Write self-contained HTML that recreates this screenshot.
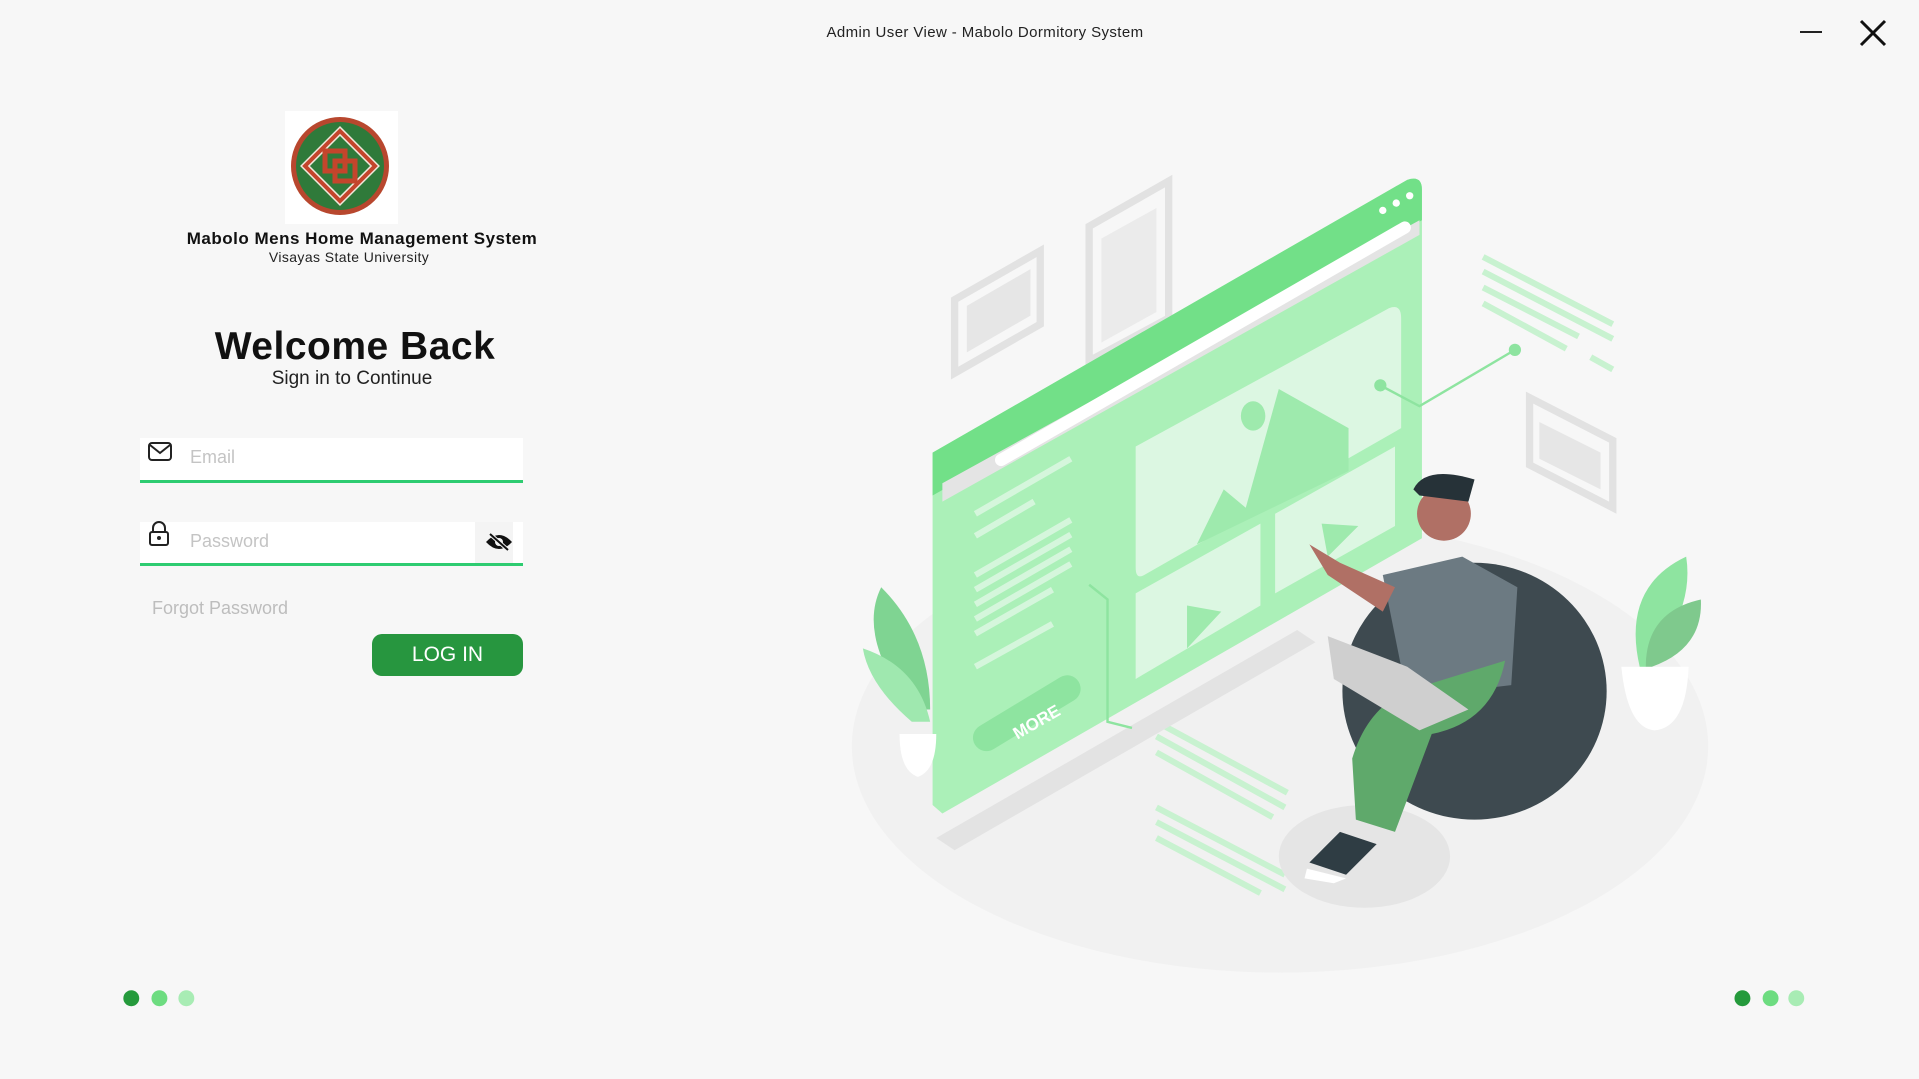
<!DOCTYPE html>
<html><head><meta charset="utf-8"><style>
*{margin:0;padding:0;box-sizing:border-box}
body{width:1919px;height:1079px;background:#f7f7f7;font-family:"Liberation Sans",sans-serif;position:relative;overflow:hidden}
.a{position:absolute}
.c{position:absolute;transform:translateX(-50%);white-space:nowrap;text-align:center}
</style></head><body>
<div class="c" style="left:985px;top:24px;font-size:15px;color:#222;letter-spacing:0.4px">Admin User View - Mabolo Dormitory System</div>
<div class="a" style="left:1800px;top:31px;width:22px;height:2px;background:#222"></div>
<svg class="a" style="left:1858px;top:18px" width="30" height="30"><path d="M3 3L27 27M27 3L3 27" stroke="#111" stroke-width="3"/></svg>

<div class="a" style="left:285px;top:111px;width:113px;height:113px;background:#fff"></div>
<svg class="a" style="left:285px;top:111px" width="113" height="113">
<circle cx="55" cy="55" r="49" fill="#b8472e"/><circle cx="55" cy="55" r="44" fill="#2f7a3a"/>
<path d="M55 20L90 55L55 90L20 55Z" fill="none" stroke="#f1e8dc" stroke-width="7"/>
<path d="M55 20L90 55L55 90L20 55Z" fill="none" stroke="#c4452c" stroke-width="4"/>
<path d="M40 40h20v20h-20zM50 50h20v20h-20z" fill="none" stroke="#c4452c" stroke-width="5"/>
</svg>
<div class="c" style="left:362px;top:229px;font-size:17px;font-weight:bold;color:#111;letter-spacing:0.5px">Mabolo Mens Home Management System</div>
<div class="c" style="left:349px;top:249px;font-size:14px;color:#222;letter-spacing:0.4px">Visayas State University</div>
<div class="c" style="left:355px;top:325px;font-size:39px;font-weight:bold;color:#111;letter-spacing:0.5px">Welcome Back</div>
<div class="c" style="left:352px;top:368px;font-size:19px;color:#222">Sign in to Continue</div>

<div class="a" style="left:140px;top:438px;width:383px;height:45px;background:#fff;border-bottom:3px solid #2ecc71"></div>
<svg class="a" style="left:147px;top:441px" width="26" height="22"><rect x="2" y="2" width="22" height="17" rx="3" fill="none" stroke="#222" stroke-width="2"/><path d="M3 4L13 12L23 4" fill="none" stroke="#222" stroke-width="2"/></svg>
<div class="a" style="left:190px;top:447px;font-size:18px;color:#c4c4c4">Email</div>

<div class="a" style="left:140px;top:522px;width:383px;height:44px;background:#fff;border-bottom:3px solid #2ecc71"></div>
<div class="a" style="left:475px;top:522px;width:38px;height:41px;background:#f4f4f4"></div>
<svg class="a" style="left:148px;top:520px" width="22" height="28"><path d="M5 12V8a6 6 0 0 1 12 0v4" fill="none" stroke="#222" stroke-width="2"/><rect x="2" y="12" width="18" height="13" rx="2" fill="none" stroke="#222" stroke-width="2"/><circle cx="11" cy="18" r="2" fill="#222"/></svg>
<div class="a" style="left:190px;top:531px;font-size:18px;color:#c4c4c4">Password</div>
<svg class="a" style="left:485px;top:532px" width="28" height="20"><path d="M1 10Q14 -4 27 10Q14 24 1 10Z" fill="#111"/><circle cx="14" cy="10" r="4" fill="#f4f4f4"/><path d="M5 2L23 18" stroke="#f4f4f4" stroke-width="4"/><path d="M5 2L23 18" stroke="#111" stroke-width="2"/></svg>

<div class="a" style="left:152px;top:598px;font-size:18px;color:#bdbdbd">Forgot Password</div>
<div class="a" style="left:372px;top:634px;width:151px;height:42px;background:#27963f;border-radius:10px;color:#fff;font-size:21px;text-align:center;line-height:42px">LOG IN</div>

<svg class="a" style="left:0;top:0" width="1919" height="1079" viewBox="0 0 1568 882">
<circle cx="107" cy="816" r="6.5" fill="#259a3c"/><circle cx="130" cy="816" r="6.5" fill="#6ddc80"/><circle cx="152" cy="816" r="6.5" fill="#a8ecb4"/>
<circle cx="1424" cy="816" r="6.5" fill="#259a3c"/><circle cx="1447" cy="816" r="6.5" fill="#6ddc80"/><circle cx="1468" cy="816" r="6.5" fill="#a8ecb4"/>
<ellipse cx="1046" cy="610" rx="350" ry="185" fill="#f1f1f1"/>
<path d="M780 245L850 205V265L780 305Z" fill="none" stroke="#e2e2e2" stroke-width="6"/>
<path d="M790 250L842 220V258L790 288Z" fill="#e6e6e6"/>
<path d="M890 185L955 148V260L890 295Z" fill="none" stroke="#e2e2e2" stroke-width="6"/>
<path d="M900 195L945 170V255L900 280Z" fill="#ebebeb"/>
<path d="M1250 325L1318 360V415L1250 380Z" fill="none" stroke="#e2e2e2" stroke-width="6"/>
<path d="M1258 345L1308 370V400L1258 375Z" fill="#e6e6e6"/>
<g stroke="#c8f2d0" stroke-width="5">
<path d="M1212 210L1318 265M1212 222L1318 277M1212 235L1290 275M1212 248L1280 285M1300 292L1318 302"/>
<path d="M945 590L1052 648M945 602L1050 660M945 615L1040 668M945 660L1050 715M945 672L1050 727M945 685L1030 730"/>
</g>
<path d="M765 685L1060 515L1075 525L780 695Z" fill="#e3e3e3"/>
<path d="M762 370L1150 147Q1162 143 1162 155V440L770 665L762 658Z" fill="#abf0b8"/>
<path d="M762 370L1150 147Q1162 143 1162 155V180L762 405Z" fill="#72e088"/>
<path d="M770 395L1160 180V192L770 410Z" fill="#e4e4e4"/>
<path d="M818 376L1148 186" stroke="#fff" stroke-width="10" stroke-linecap="round"/>
<circle cx="1130" cy="172" r="3" fill="#fff"/><circle cx="1141" cy="166" r="3" fill="#fff"/><circle cx="1152" cy="160" r="3" fill="#fff"/>
<path d="M928 365L1135 252Q1145 248 1145 260V350L935 470Q928 474 928 464Z" fill="#dcf7e2"/>
<path d="M978 445L1000 400L1018 415L1045 318L1102 350V385L978 445Z" fill="#9eeaad"/>
<ellipse cx="1024" cy="340" rx="10" ry="12" fill="#9eeaad"/>
<path d="M928 485L1030 428V495L928 555Z" fill="#dcf7e2"/>
<path d="M1042 420L1140 365V430L1042 485Z" fill="#dcf7e2"/>
<path d="M970 495L998 500L970 530Z" fill="#9eeaad"/>
<path d="M1080 428L1110 430L1085 455Z" fill="#9eeaad"/>
<g stroke="#d5f6dc" stroke-width="5"><path d="M797 420L875 375M797 438L845 410M797 470L875 425M797 482L875 437M797 494L875 449M797 506L875 461M797 518L860 482M797 545L860 510"/></g>
<path d="M806 603L872 563" stroke="#8ee4a0" stroke-width="22" stroke-linecap="round"/>
<text x="820" y="597" transform="rotate(-30 840 580)" font-family="Liberation Sans" font-weight="bold" font-size="14" fill="#fff">MORE</text>
<path d="M1128 315L1160 332L1238 286" fill="none" stroke="#8ee4a0" stroke-width="2"/>
<circle cx="1238" cy="286" r="5" fill="#8ee4a0"/><circle cx="1128" cy="315" r="5" fill="#8ee4a0"/>
<path d="M890 478L905 490V590L925 595" fill="none" stroke="#8ee4a0" stroke-width="2"/>
<path d="M735 600Q735 630 750 635Q765 630 765 600Z" fill="#fff"/>
<path d="M745 580Q700 520 720 480Q760 520 760 580Z" fill="#7fd492"/>
<path d="M745 590Q710 560 705 530Q750 545 760 590Z" fill="#9fe8af"/>
<path d="M1325 545Q1330 595 1352 597Q1378 595 1380 545Z" fill="#fff"/>
<path d="M1340 545Q1325 480 1378 455Q1385 500 1345 545Z" fill="#8ee4a0"/>
<path d="M1345 545Q1345 500 1390 490Q1392 530 1350 545Z" fill="#7fc98d"/>
<ellipse cx="1115" cy="700" rx="70" ry="42" fill="#e5e5e5"/>
<ellipse cx="1205" cy="565" rx="108" ry="105" fill="#3e4a50"/>
<path d="M1130 470L1195 455L1240 480L1235 560L1150 570Z" fill="#6c7a82"/>
<path d="M1105 620Q1120 570 1165 560L1230 540Q1220 590 1170 600L1140 680L1108 670Z" fill="#5fa96b"/>
<path d="M1085 520L1150 545L1200 580L1160 597L1090 555Z" fill="#cfcfcf"/>
<path d="M1070 705L1095 680L1125 690L1100 715Z" fill="#2f3d44"/>
<path d="M1068 710L1100 718L1090 722L1066 718Z" fill="#fff"/>
<circle cx="1180" cy="420" r="22" fill="#b07065"/>
<path d="M1155 400Q1165 380 1205 392L1200 410L1160 405Z" fill="#263238"/>
<path d="M1070 445L1085 470L1130 500L1140 480L1095 460Z" fill="#b07065"/>
</svg>
</body></html>
